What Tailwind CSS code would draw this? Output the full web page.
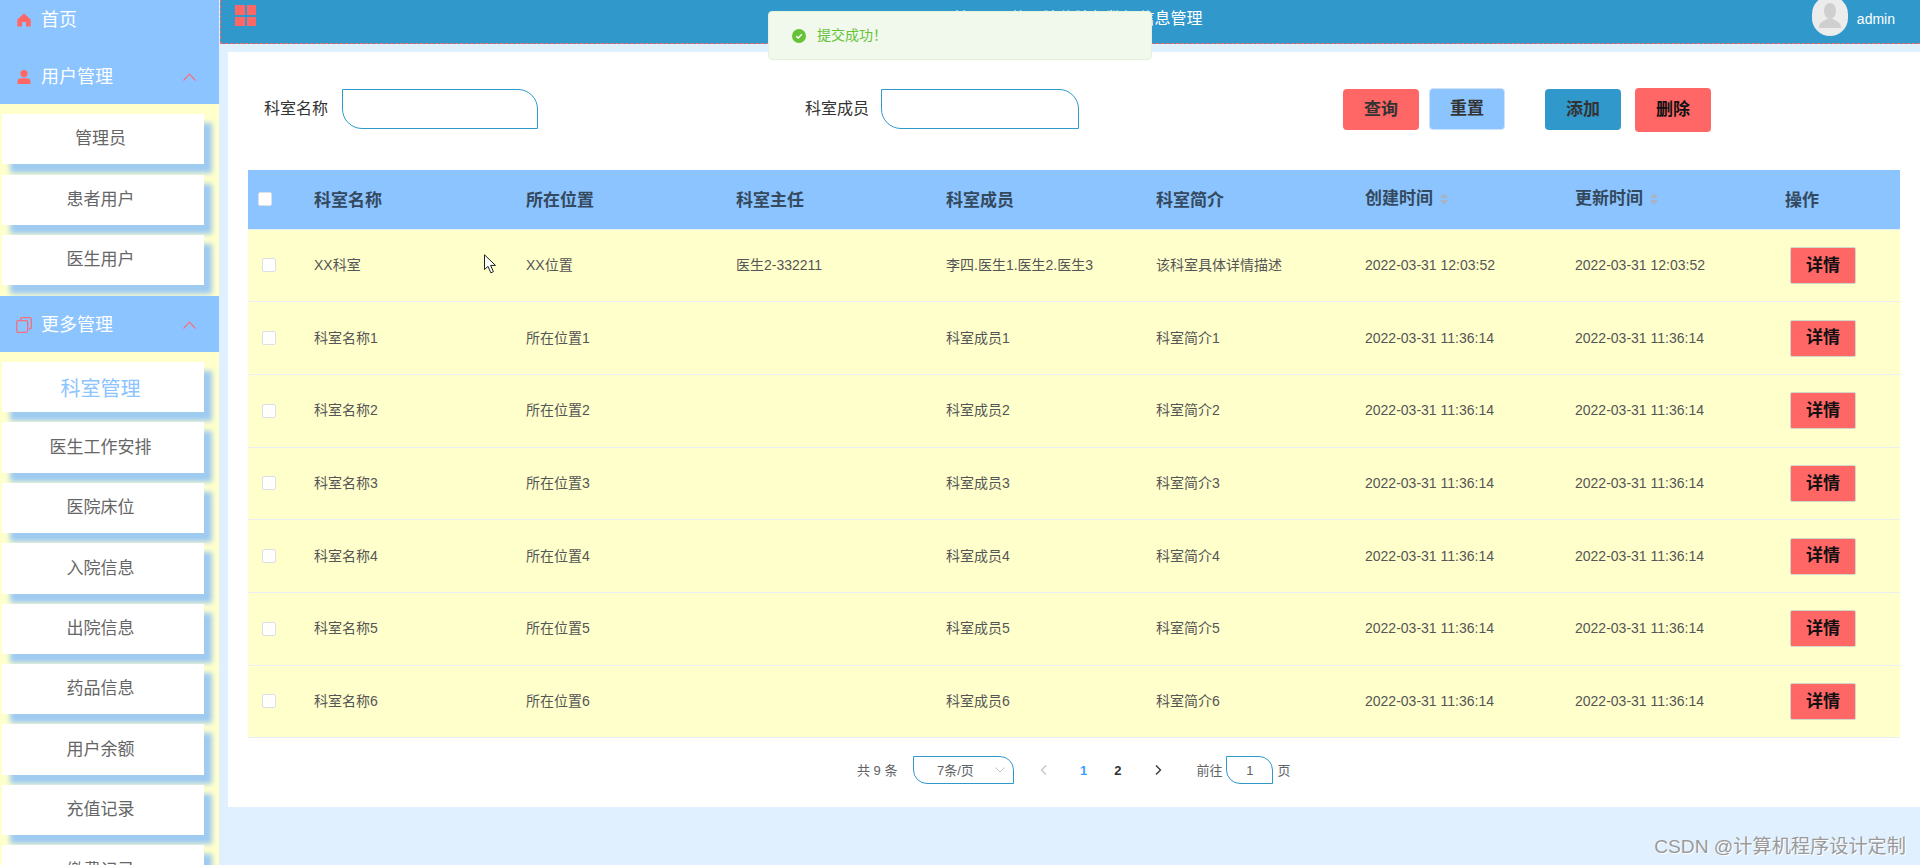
<!DOCTYPE html>
<html lang="zh-CN">
<head>
  <meta charset="UTF-8">
  <meta name="viewport" content="width=device-width, initial-scale=1.0">
  <title>科室管理</title>
  <script src="https://cdn.jsdelivr.net/npm/@tailwindcss/browser@4"></script>
</head>
<body class="relative h-[865px] overflow-hidden bg-[#e1f0fe] font-['Liberation_Sans','Noto_Sans_CJK_SC',sans-serif]">
  <div class="flex h-[865px]">
    <!-- 侧边栏 -->
    <aside class="w-[219px] h-[865px] shrink-0 overflow-hidden bg-[#ffffcc]">
      <div class="flex items-center h-[40px] bg-[#8bc4ff] pl-[17px] text-[18px] text-white">
        <svg class="w-[14px] h-[14px] mr-[10px]" viewBox="0 0 14 14"><path fill="#ff6666" d="M7 0.5 0.3 6.6V13.5H5V9h4v4.5h4.7V6.6z"/></svg>
        首页
      </div>
      <div class="flex items-center h-[64px] bg-[#8bc4ff] pl-[17px] pr-[23px] pt-[10px] text-[18px] text-white">
        <svg class="w-[14px] h-[14px] mr-[10px]" viewBox="0 0 14 14"><circle cx="7" cy="3.6" r="3.6" fill="#ff6666"/><path fill="#ff6666" d="M0.5 14v-2.6C0.5 9.3 2.2 8.2 4 8.2h6c1.8 0 3.5 1.1 3.5 3.2V14z"/></svg>
        用户管理
        <svg class="ml-auto w-[13px] h-[8px]" viewBox="0 0 13 8"><path fill="none" stroke="#f4707c" stroke-width="1.2" d="M0.5 7.5 6.5 1.2l6 6.3"/></svg>
      </div>
      <div class="h-[192px] pt-[10px] pl-[2px]">
        <a class="flex items-center justify-center w-[202px] h-[50px] mb-[10.5px] pr-[5px] bg-white text-[17px] text-[#666] shadow-[8px_9px_5px_#9fcbf1]">管理员</a>
        <a class="flex items-center justify-center w-[202px] h-[50px] mb-[10.5px] pr-[5px] bg-white text-[17px] text-[#666] shadow-[8px_9px_5px_#9fcbf1]">患者用户</a>
        <a class="flex items-center justify-center w-[202px] h-[50px] pr-[5px] bg-white text-[17px] text-[#666] shadow-[8px_9px_5px_#9fcbf1]">医生用户</a>
      </div>
      <div class="flex items-center h-[56px] bg-[#8bc4ff] pl-[16px] pr-[23px] pt-[2px] text-[18px] text-white">
        <svg class="w-[16px] h-[16px] mr-[9px]" viewBox="0 0 16 16"><path fill="none" stroke="#f4707c" stroke-width="1.3" d="M4.6 3.2V2.2q0-1.5 1.5-1.5h7.7q1.5 0 1.5 1.5v8.2q0 1.5-1.5 1.5h-1M2.2 3.6h8q1.5 0 1.5 1.5v8.7q0 1.5-1.5 1.5h-8q-1.5 0-1.5-1.5V5.1q0-1.5 1.5-1.5z"/></svg>
        更多管理
        <svg class="ml-auto w-[13px] h-[8px]" viewBox="0 0 13 8"><path fill="none" stroke="#f4707c" stroke-width="1.2" d="M0.5 7.5 6.5 1.2l6 6.3"/></svg>
      </div>
      <div class="pt-[10px] pl-[2px]">
        <a class="flex items-center justify-center w-[202px] h-[50.4px] mb-[10px] pr-[5px] pt-[3px] bg-white text-[20px] text-[#8bc4ff] shadow-[8px_9px_5px_#9fcbf1]">科室管理</a>
        <a class="flex items-center justify-center w-[202px] h-[50.4px] mb-[10px] pr-[5px] bg-white text-[17px] text-[#666] shadow-[8px_9px_5px_#9fcbf1]">医生工作安排</a>
        <a class="flex items-center justify-center w-[202px] h-[50.4px] mb-[10px] pr-[5px] bg-white text-[17px] text-[#666] shadow-[8px_9px_5px_#9fcbf1]">医院床位</a>
        <a class="flex items-center justify-center w-[202px] h-[50.4px] mb-[10px] pr-[5px] bg-white text-[17px] text-[#666] shadow-[8px_9px_5px_#9fcbf1]">入院信息</a>
        <a class="flex items-center justify-center w-[202px] h-[50.4px] mb-[10px] pr-[5px] bg-white text-[17px] text-[#666] shadow-[8px_9px_5px_#9fcbf1]">出院信息</a>
        <a class="flex items-center justify-center w-[202px] h-[50.4px] mb-[10px] pr-[5px] bg-white text-[17px] text-[#666] shadow-[8px_9px_5px_#9fcbf1]">药品信息</a>
        <a class="flex items-center justify-center w-[202px] h-[50.4px] mb-[10px] pr-[5px] bg-white text-[17px] text-[#666] shadow-[8px_9px_5px_#9fcbf1]">用户余额</a>
        <a class="flex items-center justify-center w-[202px] h-[50.4px] mb-[10px] pr-[5px] bg-white text-[17px] text-[#666] shadow-[8px_9px_5px_#9fcbf1]">充值记录</a>
        <a class="flex items-center justify-center w-[202px] h-[50.4px] pr-[5px] bg-white text-[17px] text-[#666] shadow-[8px_9px_5px_#9fcbf1]">缴费记录</a>
      </div>
    </aside>

    <main class="flex-1 min-w-0 pl-px">
      <!-- 顶栏 -->
      <header class="relative flex items-center justify-center h-[44px] pb-[10px] pl-[14px] bg-[#3198cc] border-b border-l border-dashed border-[#ff6666] text-[16px] text-white">
        <div class="absolute left-[14px] top-[5px] grid grid-cols-2 gap-[2px]">
          <span class="w-[9.5px] h-[9.5px] bg-[#ff6666]"></span>
          <span class="w-[9.5px] h-[9.5px] bg-[#ff6666]"></span>
          <span class="w-[9.5px] h-[9.5px] bg-[#ff6666]"></span>
          <span class="w-[9.5px] h-[9.5px] bg-[#ff6666]"></span>
        </div>
        <span class="pt-[5px]">基于vue的医院住院部数据信息管理</span>
        <div class="absolute right-[25px] -top-[4px] flex items-center">
          <span class="flex items-end justify-center w-[36px] h-[40px] rounded-full bg-[#ececec] overflow-hidden">
            <svg class="w-[24px] h-[28px] mb-[6px]" viewBox="0 0 24 28"><ellipse cx="12" cy="9" rx="6" ry="8" fill="#cfcfcf"/><path fill="#cfcfcf" d="M1 26c0-6 5-7 8-9h6c3 2 8 3 8 9z"/></svg>
          </span>
          <span class="ml-[9px] pt-[6px] text-[14px] text-white">admin</span>
        </div>
      </header>

      <!-- 内容卡片 -->
      <section class="mt-[8px] ml-[8px] h-[755px] bg-white">
        <form class="flex items-start h-[118px] pt-[37px] text-[16px] text-[#333]">
          <label class="ml-[36px] w-[66px] h-[40px] leading-[40px]">科室名称</label>
          <input class="ml-[12px] w-[196px] h-[40px] bg-white border border-[#3198cc] rounded-tr-[20px] rounded-bl-[20px]">
          <label class="ml-[267px] w-[66px] h-[40px] leading-[40px]">科室成员</label>
          <input class="ml-[10px] w-[198px] h-[40px] bg-white border border-[#3198cc] rounded-tr-[20px] rounded-bl-[20px]">
          <button type="button" class="ml-[264px] w-[76px] h-[41px] rounded bg-[#ff6666] text-[17px] font-bold text-[#333]">查询</button>
          <button type="button" class="ml-[10px] w-[76px] h-[42px] -mt-px rounded border border-[#cfe2fa] bg-[#8bc4ff] text-[17px] font-bold text-[#333]">重置</button>
          <button type="button" class="ml-[40px] w-[76px] h-[41px] rounded bg-[#3198cc] text-[17px] font-bold text-[#333]">添加</button>
          <button type="button" class="ml-[14px] w-[76px] h-[44px] -mt-px rounded bg-[#ff6666] text-[17px] font-bold text-[#111]">删除</button>
        </form>

        <div class="ml-[20px] mr-[20px]">
          <table class="w-[1652px] table-fixed border-collapse text-[14px] text-[#555]">
            <colgroup>
              <col class="w-[56px]"><col class="w-[212px]"><col class="w-[210px]"><col class="w-[210px]"><col class="w-[210px]"><col class="w-[209px]"><col class="w-[210px]"><col class="w-[210px]"><col class="w-[125px]">
            </colgroup>
            <thead>
              <tr class="h-[59px] bg-[#8bc4ff] text-left text-[17px] font-bold text-[#34495e]">
                <th class="pl-[10px]"><span class="block w-[14px] h-[14px] rounded-[2px] border border-[#dcdfe6] bg-white"></span></th>
                <th class="pl-[10px] pt-[2px]">科室名称</th>
                <th class="pl-[10px] pt-[2px]">所在位置</th>
                <th class="pl-[10px] pt-[2px]">科室主任</th>
                <th class="pl-[10px] pt-[2px]">科室成员</th>
                <th class="pl-[10px] pt-[2px]">科室简介</th>
                <th class="pl-[10px] pb-[2px]">创建时间<svg class="inline-block ml-[6px] w-[10px] h-[14px] align-[-2px]" viewBox="0 0 10 14"><path fill="#a8b4c4" d="M5 1 9 6H1zM5 13 1 8h8z"/></svg></th>
                <th class="pl-[10px] pb-[2px]">更新时间<svg class="inline-block ml-[6px] w-[10px] h-[14px] align-[-2px]" viewBox="0 0 10 14"><path fill="#a8b4c4" d="M5 1 9 6H1zM5 13 1 8h8z"/></svg></th>
                <th class="pl-[10px] pt-[2px]">操作</th>
              </tr>
            </thead>
            <tbody>
              <tr class="h-[72.7px] bg-[#ffffcc] border-t border-[#ebeef5]">
                <td class="pl-[14px]"><span class="block w-[14px] h-[14px] rounded-[2px] border border-[#dcdfe6] bg-white"></span></td>
                <td class="pl-[10px]">XX科室</td><td class="pl-[10px]">XX位置</td><td class="pl-[10px]">医生2-332211</td><td class="pl-[10px]">李四.医生1.医生2.医生3</td><td class="pl-[10px]">该科室具体详情描述</td>
                <td class="pl-[10px]">2022-03-31 12:03:52</td><td class="pl-[10px]">2022-03-31 12:03:52</td>
                <td class="pl-[15px]"><button type="button" class="w-[66px] h-[37px] rounded-[2px] border border-[#cfd8c8] bg-[#ff6666] text-[17px] font-bold text-[#111]">详情</button></td>
              </tr>
              <tr class="h-[72.7px] bg-[#ffffcc] border-t border-[#ebeef5]">
                <td class="pl-[14px]"><span class="block w-[14px] h-[14px] rounded-[2px] border border-[#dcdfe6] bg-white"></span></td>
                <td class="pl-[10px]">科室名称1</td><td class="pl-[10px]">所在位置1</td><td></td><td class="pl-[10px]">科室成员1</td><td class="pl-[10px]">科室简介1</td>
                <td class="pl-[10px]">2022-03-31 11:36:14</td><td class="pl-[10px]">2022-03-31 11:36:14</td>
                <td class="pl-[15px]"><button type="button" class="w-[66px] h-[37px] rounded-[2px] border border-[#cfd8c8] bg-[#ff6666] text-[17px] font-bold text-[#111]">详情</button></td>
              </tr>
              <tr class="h-[72.7px] bg-[#ffffcc] border-t border-[#ebeef5]">
                <td class="pl-[14px]"><span class="block w-[14px] h-[14px] rounded-[2px] border border-[#dcdfe6] bg-white"></span></td>
                <td class="pl-[10px]">科室名称2</td><td class="pl-[10px]">所在位置2</td><td></td><td class="pl-[10px]">科室成员2</td><td class="pl-[10px]">科室简介2</td>
                <td class="pl-[10px]">2022-03-31 11:36:14</td><td class="pl-[10px]">2022-03-31 11:36:14</td>
                <td class="pl-[15px]"><button type="button" class="w-[66px] h-[37px] rounded-[2px] border border-[#cfd8c8] bg-[#ff6666] text-[17px] font-bold text-[#111]">详情</button></td>
              </tr>
              <tr class="h-[72.7px] bg-[#ffffcc] border-t border-[#ebeef5]">
                <td class="pl-[14px]"><span class="block w-[14px] h-[14px] rounded-[2px] border border-[#dcdfe6] bg-white"></span></td>
                <td class="pl-[10px]">科室名称3</td><td class="pl-[10px]">所在位置3</td><td></td><td class="pl-[10px]">科室成员3</td><td class="pl-[10px]">科室简介3</td>
                <td class="pl-[10px]">2022-03-31 11:36:14</td><td class="pl-[10px]">2022-03-31 11:36:14</td>
                <td class="pl-[15px]"><button type="button" class="w-[66px] h-[37px] rounded-[2px] border border-[#cfd8c8] bg-[#ff6666] text-[17px] font-bold text-[#111]">详情</button></td>
              </tr>
              <tr class="h-[72.7px] bg-[#ffffcc] border-t border-[#ebeef5]">
                <td class="pl-[14px]"><span class="block w-[14px] h-[14px] rounded-[2px] border border-[#dcdfe6] bg-white"></span></td>
                <td class="pl-[10px]">科室名称4</td><td class="pl-[10px]">所在位置4</td><td></td><td class="pl-[10px]">科室成员4</td><td class="pl-[10px]">科室简介4</td>
                <td class="pl-[10px]">2022-03-31 11:36:14</td><td class="pl-[10px]">2022-03-31 11:36:14</td>
                <td class="pl-[15px]"><button type="button" class="w-[66px] h-[37px] rounded-[2px] border border-[#cfd8c8] bg-[#ff6666] text-[17px] font-bold text-[#111]">详情</button></td>
              </tr>
              <tr class="h-[72.7px] bg-[#ffffcc] border-t border-[#ebeef5]">
                <td class="pl-[14px]"><span class="block w-[14px] h-[14px] rounded-[2px] border border-[#dcdfe6] bg-white"></span></td>
                <td class="pl-[10px]">科室名称5</td><td class="pl-[10px]">所在位置5</td><td></td><td class="pl-[10px]">科室成员5</td><td class="pl-[10px]">科室简介5</td>
                <td class="pl-[10px]">2022-03-31 11:36:14</td><td class="pl-[10px]">2022-03-31 11:36:14</td>
                <td class="pl-[15px]"><button type="button" class="w-[66px] h-[37px] rounded-[2px] border border-[#cfd8c8] bg-[#ff6666] text-[17px] font-bold text-[#111]">详情</button></td>
              </tr>
              <tr class="h-[72.7px] bg-[#ffffcc] border-t border-b border-[#ebeef5]">
                <td class="pl-[14px]"><span class="block w-[14px] h-[14px] rounded-[2px] border border-[#dcdfe6] bg-white"></span></td>
                <td class="pl-[10px]">科室名称6</td><td class="pl-[10px]">所在位置6</td><td></td><td class="pl-[10px]">科室成员6</td><td class="pl-[10px]">科室简介6</td>
                <td class="pl-[10px]">2022-03-31 11:36:14</td><td class="pl-[10px]">2022-03-31 11:36:14</td>
                <td class="pl-[15px]"><button type="button" class="w-[66px] h-[37px] rounded-[2px] border border-[#cfd8c8] bg-[#ff6666] text-[17px] font-bold text-[#111]">详情</button></td>
              </tr>
            </tbody>
          </table>

          <!-- 分页 -->
          <div class="flex items-center h-[28px] mt-[18px] pl-[609px] text-[13px] text-[#606266]">
            <span class="w-[42px]">共 9 条</span>
            <span class="relative flex items-center ml-[14px] w-[101px] h-[28px] pl-[23px] border border-[#3198cc] rounded-tr-[14px] rounded-bl-[14px]">7条/页
              <svg class="absolute right-[8px] top-[10px] w-[10px] h-[6px]" viewBox="0 0 10 6"><path fill="none" stroke="#c0c4cc" d="M0.5 0.5 5 5l4.5-4.5"/></svg>
            </span>
            <svg class="ml-[26px] w-[7px] h-[10px]" viewBox="0 0 7 10"><path fill="none" stroke="#c0c4cc" stroke-width="1.3" d="M6 0.5 1.5 5 6 9.5"/></svg>
            <span class="ml-[33px] font-bold text-[#409eff]">1</span>
            <span class="ml-[27px] font-bold text-[#303133]">2</span>
            <svg class="ml-[34px] w-[7px] h-[10px]" viewBox="0 0 7 10"><path fill="none" stroke="#303133" stroke-width="1.3" d="M1 0.5 5.5 5 1 9.5"/></svg>
            <span class="ml-[34px]">前往</span>
            <span class="flex items-center justify-center ml-[4px] w-[47px] h-[28px] border border-[#3198cc] rounded-tr-[14px] rounded-bl-[14px]">1</span>
            <span class="ml-[4px]">页</span>
          </div>
        </div>
      </section>
    </main>
  </div>

  <!-- 提示 -->
  <div class="absolute left-[768px] top-[11px] flex items-center w-[384px] h-[49px] pl-[23px] rounded bg-[#f0f9eb] border border-[#e1f3d8] text-[14px] text-[#67c23a]">
    <svg class="w-[14px] h-[14px] mr-[11px]" viewBox="0 0 14 14"><circle cx="7" cy="7" r="7" fill="#67c23a"/><path fill="none" stroke="#fff" stroke-width="1.3" d="M4.2 7.2 6.2 9l3.6-3.8"/></svg>
    提交成功！
  </div>

  <!-- 鼠标指针 -->
  <svg class="absolute left-[484px] top-[254px] w-[13px] h-[20px]" viewBox="0 0 13 20"><path fill="#fff" stroke="#222" d="M0.5 0.8V15.5L4 12.4 6.8 18.8 9.4 17.7 6.6 11.4H11.5z"/></svg>

  <!-- 水印 -->
  <div class="absolute right-[14px] top-[834px] text-[19.2px] leading-[26px] text-[#9a9a9a] [text-shadow:1px_1px_0_#fff]">CSDN @计算机程序设计定制</div>
</body>
</html>
